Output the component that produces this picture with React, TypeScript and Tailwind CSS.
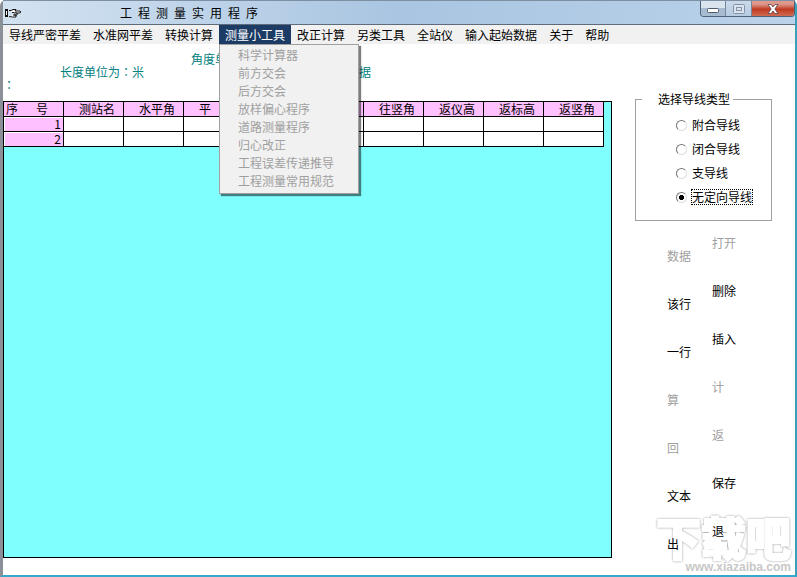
import { useState } from 'react';
import clsx from 'clsx';

const menuItems = [
  '导线严密平差',
  '水准网平差',
  '转换计算',
  '测量小工具',
  '改正计算',
  '另类工具',
  '全站仪',
  '输入起始数据',
  '关于',
  '帮助',
];

const toolItems = [
  '科学计算器',
  '前方交会',
  '后方交会',
  '放样偏心程序',
  '道路测量程序',
  '归心改正',
  '工程误差传递推导',
  '工程测量常用规范',
];

const columns = ['测站名', '水平角', '平\u2003距', '往仪高', '往标高', '往竖角', '返仪高', '返标高', '返竖角'];

const traverseTypes = ['附合导线', '闭合导线', '支导线', '无定向导线'];

// Each button breaks its caption over two lines
const actions = [
  { first: '打开', second: '数据', disabled: true },
  { first: '删除', second: '该行', disabled: false },
  { first: '插入', second: '一行', disabled: false },
  { first: '计', second: '算', disabled: true },
  { first: '返', second: '回', disabled: true },
  { first: '保存', second: '文本', disabled: false },
  { first: '退', second: '出', disabled: false },
];

function HandIcon() {
  return (
    <svg width="17" height="11" viewBox="0 0 17 11" fill="none" stroke="#111" strokeWidth="1">
      <path d="M0 1h3v8H0z" fill="#111" stroke="none" />
      <path d="M1.500 3v4" stroke="#fff" />
      <path d="M4 2.500h2l2-1h3l-1 1.500h5q1.500 1 0 2H10" fill="#fff" />
      <path d="M9 5h3v2H9M8 7h3v2H7.500L4 8.500M7 4.500h2" fill="#fff" />
    </svg>
  );
}

function TitleBar() {
  return (
    <header className="flex h-6 items-start border-t border-[#7d8fa3] bg-linear-to-r from-[#d3e2f1] via-[#a9c5e1] to-[#bad2ea]">
      <div className="flex h-6 flex-1 items-center pl-[2px]">
        <HandIcon />
        <h1 className="ml-[98px] text-[12px] whitespace-pre text-black">
          {'工程测量实用程序'.split('').join('\u2002')}
        </h1>
      </div>
      <div className="flex h-4 overflow-hidden rounded-b-[4px] border border-t-0 border-[#4f6176]">
        <button
          aria-label="最小化"
          className="flex w-[25px] items-end justify-center border-r border-[#73869b] bg-linear-to-b from-[#d9e4ef] from-45% to-[#a7bbd0] to-50% pb-[3px]"
        >
          <svg width="12" height="6" viewBox="0 0 12 6">
            <rect x="0.5" y="1.500" width="11" height="4" rx="1" fill="#fff" stroke="#535b68" />
          </svg>
        </button>
        <button
          aria-label="最大化"
          disabled
          className="flex w-[26px] items-center justify-center border-r border-[#73869b] bg-linear-to-b from-[#cbdaea] to-[#b6cbe0]"
        >
          <svg width="12" height="10" viewBox="0 0 12 10" fill="none" stroke="#8793a3">
            <rect x="0.5" y="0.5" width="11" height="9" rx="1" fill="#d9e4f0" />
            <rect x="3.500" y="3.500" width="5" height="3" />
          </svg>
        </button>
        <button
          aria-label="关闭"
          className="flex w-[42px] items-center justify-center bg-linear-to-b from-[#dd9a8c] from-20% via-[#bf3820] via-55% to-[#cf6b50]"
        >
          <svg width="12" height="10" viewBox="0 0 12 10">
            <path
              d="M1 .5h3l2 2.500 2-2.500h3L7.800 5 11 9.500H8L6 7 4 9.500H1L4.200 5z"
              fill="#fff"
              stroke="#5b4450"
              strokeWidth="0.800"
            />
          </svg>
        </button>
      </div>
    </header>
  );
}

function MenuBar() {
  return (
    <nav className="flex h-5 border-t border-[#5d6b7a] bg-[#f1f1f1]">
      {menuItems.map((item) =>
        item === '测量小工具' ? (
          <div key={item} className="relative">
            <button className="h-full bg-[#1c3c66] px-1.5 text-white">{item}</button>
            <ul className="absolute top-full left-0 z-10 w-[140px] border border-[#a0a0a0] bg-[#f1f1f1] pt-px pb-[3px] shadow-[2px_2px_1px_rgba(0,0,0,0.5)]">
              {toolItems.map((tool) => (
                <li key={tool}>
                  <button disabled className="block h-[18px] w-full pl-[18px] text-left text-[#a0a0a0]">
                    {tool}
                  </button>
                </li>
              ))}
            </ul>
          </div>
        ) : (
          <button key={item} className="px-1.5">
            {item}
          </button>
        )
      )}
    </nav>
  );
}

function DataGrid() {
  return (
    <div className="flex-1 border border-black bg-[#80ffff]">
      <table className="w-[600px] table-fixed border-separate border-spacing-0 leading-[14px]">
        <thead>
          <tr className="h-[15px]">
            <th className="border-r border-b border-black bg-[#ffc0ff] p-0 pl-[2px] text-left font-normal whitespace-pre">
              {'序\u2003\u2002号'}
            </th>
            {columns.map((name) => (
              <th
                key={name}
                className="border-r border-b border-black bg-[#ffc0ff] p-0 pl-[15px] text-left font-normal whitespace-pre"
              >
                {name}
              </th>
            ))}
          </tr>
        </thead>
        <tbody>
          {[1, 2].map((row) => (
            <tr key={row} className="h-[15px]">
              <th className="border-r border-b border-black bg-[#ffc0ff] p-0 pr-[2px] text-right font-normal shadow-[inset_1px_1px_0_#fff]">
                {row}
              </th>
              {columns.map((name) => (
                <td key={name} className="border-r border-b border-black bg-white p-0" />
              ))}
            </tr>
          ))}
        </tbody>
      </table>
    </div>
  );
}

function SidePanel() {
  const [selected, setSelected] = useState('无定向导线');

  return (
    <aside className="relative w-[183px] px-[23px] pt-[47px]">
      <fieldset className="w-full min-w-0 border border-[#a0a0a0] pt-1.5 pb-[11px]">
        <legend className="ml-1.5 pr-[3px] pl-4 leading-4">选择导线类型</legend>
        {traverseTypes.map((type) => (
          <label key={type} className="ml-10 flex h-6 items-center gap-1">
            <input
              type="radio"
              name="traverse"
              checked={selected === type}
              onChange={() => setSelected(type)}
              className="size-[11px] appearance-none rounded-full border border-t-[#777] border-r-[#ddd] border-b-[#ddd] border-l-[#777] bg-white checked:bg-radial checked:from-black checked:from-35% checked:to-white checked:to-45%"
            />
            <span
              className={clsx(
                'border border-dotted leading-[14px]',
                selected === type ? 'border-black' : 'border-transparent'
              )}
            >
              {type}
            </span>
          </label>
        ))}
      </fieldset>
      <div className="mt-1 ml-8 flex flex-col items-start">
        {actions.map(({ first, second, disabled }) => (
          <button
            key={first}
            disabled={disabled}
            className="h-12 w-[72px] indent-[45px] leading-[13px] text-left text-black disabled:text-[#a0a0a0]"
          >
            {first}
            <br />
            <span className="block indent-0">{second}</span>
          </button>
        ))}
      </div>
    </aside>
  );
}

function Watermark() {
  return (
    <div
      aria-hidden="true"
      className="pointer-events-none absolute right-1 bottom-px flex flex-col items-end font-black text-white"
    >
      <span className="text-[45px] leading-[46px] drop-shadow-[0_0_1px_#999] [-webkit-text-stroke:2px_#fff]">下载吧</span>
      <span className="font-['Liberation_Sans',sans-serif] text-[12px] leading-[14px] font-bold text-[#c8c8c8]">
        www.xiazaiba.com
      </span>
    </div>
  );
}

export default function App() {
  return (
    <div className="flex min-h-screen flex-col rounded-t-md border-r-2 border-b-2 border-l-3 border-r-[#3a9fb8] border-b-[#35a8cc] border-l-[#8a8f98] bg-white font-['Noto_Sans_CJK_SC','Liberation_Sans',sans-serif] text-[12px] text-black">
      <TitleBar />
      <MenuBar />
      <main className="relative flex flex-1">
        <section className="flex flex-1 flex-col pb-[17px]">
          <div className="h-[57px] pt-2 font-['Noto_Sans_CJK_TC','Noto_Sans_CJK_SC',sans-serif] leading-[13px] text-[#008080]">
            <p className="pl-[188px]">角度单位为：度</p>
            <p className="flex pl-[57px]">
              <span className="w-[299px]">长度单位为：米</span>
              <span>据</span>
            </p>
            <p>：</p>
          </div>
          <DataGrid />
        </section>
        <Watermark />
        <SidePanel />
      </main>
    </div>
  );
}
